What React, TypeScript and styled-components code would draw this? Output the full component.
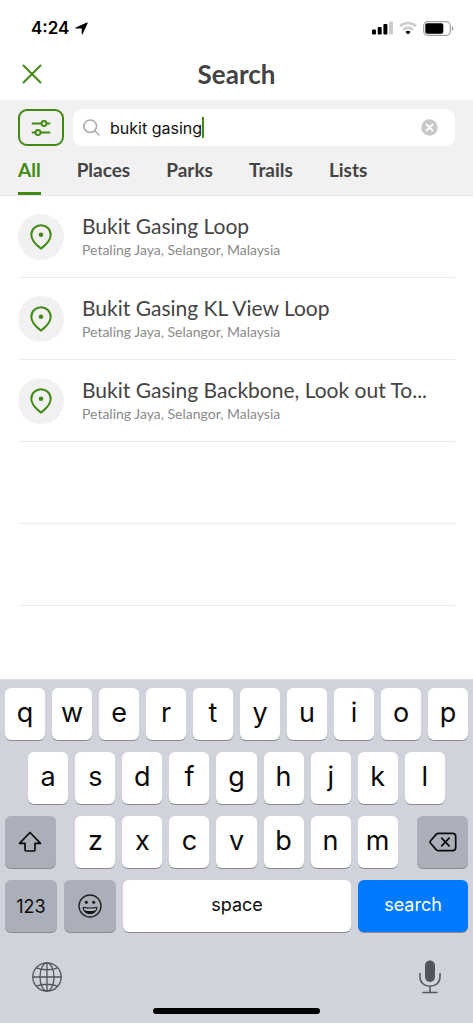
import React, { useState } from "react";
import styled, { createGlobalStyle, css } from "styled-components";

const GREEN = "#428a13";
const INK = "#444444";
const SYSTEM = `Inter, "Liberation Sans", sans-serif`;
const BRAND = `Lato, "Open Sans", sans-serif`;

const GlobalStyle = createGlobalStyle`
  *, *::before, *::after { box-sizing: border-box; }
  html, body, #root { margin: 0; min-height: 100vh; }
  body { background: #fff; color: ${INK}; font-family: ${BRAND}; }
  button { border: 0; padding: 0; margin: 0; background: none; color: inherit; font: inherit; cursor: pointer; }
  svg { display: block; }
`;

const Screen = styled.div`
  display: flex;
  flex-direction: column;
  min-height: 100vh;
`;

const StatusBar = styled.div`
  display: flex;
  align-items: center;
  justify-content: space-between;
  height: 48px;
  padding: 8px 19px 0 31px;
  color: #000;
`;

const Clock = styled.div`
  display: flex;
  align-items: center;
  gap: 6px;
  font: 600 17px/20px ${SYSTEM};
`;

const Indicators = styled.div`
  display: flex;
  align-items: center;
  gap: 6px;
`;

const Header = styled.header`
  display: grid;
  grid-template-columns: 28px 1fr 28px;
  align-items: center;
  height: 52px;
  padding: 0 18px;
`;

const CloseButton = styled.button`
  display: grid;
  place-items: center;
  width: 28px;
  height: 28px;
  color: ${GREEN};
`;

const Title = styled.h1`
  margin: 0;
  text-align: center;
  font-size: 26px;
  line-height: 28px;
  font-weight: 700;
`;

const SearchPanel = styled.section`
  background: #f1f1f1;
  border-bottom: 1px solid #e6e6e6;
  padding: 9px 18px 0;
`;

const SearchRow = styled.div`
  display: flex;
  gap: 9px;
`;

const FilterButton = styled.button`
  display: grid;
  place-items: center;
  flex: none;
  width: 46px;
  height: 37px;
  border: 2px solid ${GREEN};
  border-radius: 9px;
  color: ${GREEN};
`;

const SearchBox = styled.div`
  display: flex;
  align-items: center;
  flex: 1;
  min-width: 0;
  height: 37px;
  padding: 0 17px 0 10px;
  border-radius: 9px;
  background: #fff;
`;

const SearchField = styled.label`
  display: flex;
  align-items: center;
  flex: 1;
  min-width: 0;
  cursor: text;
`;

const SearchInput = styled.input`
  field-sizing: content;
  min-width: 2px;
  margin: 0 0 0 10px;
  padding: 0;
  border: 0;
  outline: 0;
  background: none;
  color: #111;
  caret-color: transparent;
  font: 400 16px/20px ${SYSTEM};
`;

const Caret = styled.span`
  width: 2px;
  height: 21px;
  background: ${GREEN};
`;

const Tabs = styled.nav`
  display: flex;
  gap: 36px;
  margin-top: 12px;
`;

const Tab = styled.button<{ $active: boolean }>`
  height: 37px;
  padding-bottom: 10px;
  border-bottom: 3px solid ${(p) => (p.$active ? GREEN : "transparent")};
  color: ${(p) => (p.$active ? GREEN : INK)};
  font-size: 19px;
  line-height: 24px;
  font-weight: 700;
`;

const Results = styled.ul`
  flex: 1;
  margin: 0;
  padding: 0 18px;
  list-style: none;
`;

const ResultRow = styled.li`
  height: 82px;
  border-bottom: 1px solid #ececec;
`;

const ResultButton = styled.button`
  display: flex;
  align-items: center;
  gap: 18px;
  width: 100%;
  height: 100%;
  text-align: left;
`;

const PinBadge = styled.span`
  display: grid;
  place-items: center;
  flex: none;
  width: 46px;
  height: 46px;
  border-radius: 50%;
  background: #f1f1f1;
  color: ${GREEN};
`;

const ResultText = styled.span`
  flex: 1;
  min-width: 0;
  padding-right: 24px;
`;

const ResultName = styled.span`
  display: block;
  overflow: hidden;
  text-overflow: ellipsis;
  white-space: nowrap;
  font-size: 21px;
  line-height: 26px;
`;

const ResultPlace = styled.span`
  display: block;
  color: #8a8a8a;
  font-size: 14px;
  line-height: 22px;
`;

const Keyboard = styled.section`
  display: flex;
  flex-direction: column;
  gap: 12px;
  padding: 8px 5px 9px;
  border-top: 1px solid #dcdee4;
  background: #d0d3db;
  color: #0b0b0b;
  font-family: ${SYSTEM};
`;

const KeyRow = styled.div<{ $inset?: boolean }>`
  display: flex;
  justify-content: space-between;
  gap: 7px;
  padding: 0 ${(p) => (p.$inset ? "5%" : "0")};
`;

const LetterGroup = styled.div`
  display: flex;
  gap: 7px;
  flex: 0 0 auto;
  width: 69.6%;
`;

type Tone = "light" | "dark" | "blue";

const tones = {
  light: css`background: #fff;`,
  dark: css`background: #abafba;`,
  blue: css`background: #007aff; color: #fff;`,
};

const Key = styled.button<{ $tone?: Tone; $basis?: string; $word?: boolean }>`
  display: flex;
  align-items: center;
  justify-content: center;
  flex: ${(p) => (p.$basis ? `0 0 ${p.$basis}` : "1 1 0")};
  min-width: 0;
  height: 52px;
  padding-bottom: ${(p) => (p.$tone === "dark" ? 0 : 3)}px;
  border-radius: 6px;
  box-shadow: 0 1px 0 #898b90;
  font-size: ${(p) => (p.$word ? 18 : 27)}px;
  ${(p) => tones[p.$tone ?? "light"]}
`;

const Dock = styled.div`
  display: flex;
  align-items: center;
  justify-content: space-between;
  height: 38px;
  margin-top: 14px;
  padding: 0 27px;
  color: #50555e;
`;

const HomeIndicator = styled.div`
  align-self: center;
  width: 36%;
  height: 6px;
  border-radius: 3px;
  background: #000;
`;

const LocationArrow = () => (
  <svg width="13" height="13" viewBox="0 0 13 13" fill="currentColor" aria-hidden="true">
    <path d="M12.4.5c.3.1.3.4.2.7L7.700 12c-.3.6-1 .5-1-.2V6.500H1C.3 6.500.1 5.800.8 5.500L11.800.5c.2-.1.4-.1.6 0z" />
  </svg>
);

const SignalIcon = () => (
  <svg width="21" height="14" viewBox="0 0 21 14" aria-hidden="true">
    <rect x="0" y="8.500" width="4" height="5" rx="1" />
    <rect x="5.700" y="6" width="4" height="7.500" rx="1" />
    <rect x="11.400" y="3" width="4" height="10.500" rx="1" />
    <rect x="17" y="0.500" width="4" height="13" rx="1" fill="#ccc" />
  </svg>
);

const WifiIcon = () => (
  <svg width="18" height="14" viewBox="0 0 18 14" fill="none" aria-hidden="true">
    <path d="M1 5.200a11.500 11.500 0 0 1 16 0" stroke="#ccc" strokeWidth="2.600" />
    <path d="M4 8.700a7.300 7.300 0 0 1 10 0" stroke="#ccc" strokeWidth="2.400" />
    <path d="M9 13.500 6.400 10.900a3.900 3.900 0 0 1 5.200 0z" fill="#000" />
  </svg>
);

const BatteryIcon = () => (
  <svg width="31" height="15" viewBox="0 0 31 15" aria-hidden="true">
    <rect x="0.700" y="0.700" width="26.600" height="13.600" rx="4" fill="none" stroke="#a3a3a3" strokeWidth="1.200" />
    <rect x="2.300" y="2.300" width="18" height="10.400" rx="2" />
    <path d="M28.800 5v5c1-.4 1.700-1.400 1.700-2.500S29.800 5.400 28.800 5z" fill="#a3a3a3" />
  </svg>
);

const CloseIcon = () => (
  <svg width="20" height="20" viewBox="0 0 20 20" fill="none" stroke="currentColor" strokeWidth="2" strokeLinecap="round" aria-hidden="true">
    <path d="M1.500 1.500l17 17M18.500 1.500l-17 17" />
  </svg>
);

const SlidersIcon = () => (
  <svg width="20" height="18" viewBox="0 0 20 18" fill="none" stroke="currentColor" strokeWidth="1.900" strokeLinecap="round" aria-hidden="true">
    <path d="M1.500 4.500h8.800M15.700 4.500h2.800M1.500 13.500h2.800M9.700 13.500h8.800" />
    <circle cx="13" cy="4.500" r="2.500" />
    <circle cx="7" cy="13.500" r="2.500" />
  </svg>
);

const SearchIcon = () => (
  <svg width="17" height="17" viewBox="0 0 17 17" fill="none" stroke="#aaa" strokeWidth="1.500" strokeLinecap="round" aria-hidden="true">
    <circle cx="7.200" cy="7.200" r="6.300" />
    <path d="M11.800 11.800l4.200 4.200" />
  </svg>
);

const ClearIcon = () => (
  <svg width="17" height="17" viewBox="0 0 17 17" aria-hidden="true">
    <circle cx="8.500" cy="8.500" r="8.200" fill="#c8c8c8" />
    <path d="M5.500 5.500l6 6M11.500 5.500l-6 6" stroke="#fff" strokeWidth="1.800" strokeLinecap="round" />
  </svg>
);

const PinIcon = () => (
  <svg width="22" height="26" viewBox="0 0 22 26" fill="none" aria-hidden="true">
    <path d="M11 24.600C7.500 22 1.300 17.200 1.300 10.800a9.700 9.500 0 0 1 19.400 0C20.700 17.200 14.500 22 11 24.600z" stroke="currentColor" strokeWidth="2" strokeLinejoin="round" />
    <circle cx="11" cy="10.800" r="2.300" fill="currentColor" />
  </svg>
);

const ShiftIcon = () => (
  <svg width="24" height="22" viewBox="0 0 24 22" fill="none" stroke="currentColor" strokeWidth="1.700" strokeLinejoin="round" aria-hidden="true">
    <path d="M12 1.500 22.500 12.300H17v6.500c0 .8-.4 1.200-1.200 1.200H8.200c-.8 0-1.200-.4-1.200-1.200v-6.500H1.500z" />
  </svg>
);

const DeleteIcon = () => (
  <svg width="28" height="20" viewBox="0 0 28 20" fill="none" stroke="currentColor" strokeWidth="1.700" strokeLinecap="round" strokeLinejoin="round" aria-hidden="true">
    <path d="M9.300 1.300H23.500a3.200 3.200 0 0 1 3.200 3.200v11a3.200 3.200 0 0 1-3.200 3.200H9.300c-.8 0-1.400-.3-1.900-.8L1.600 11.200c-.7-.8-.7-1.600 0-2.400l5.800-6.700c.5-.5 1.100-.8 1.900-.8z" />
    <path d="M12.700 6.200l7.400 7.600M20.100 6.200l-7.400 7.600" />
  </svg>
);

const EmojiIcon = () => (
  <svg width="24" height="24" viewBox="0 0 24 24" fill="none" aria-hidden="true">
    <circle cx="12" cy="12" r="11" stroke="#222428" strokeWidth="1.400" />
    <circle cx="8.300" cy="8.300" r="1.500" fill="#111" />
    <circle cx="15.700" cy="8.300" r="1.500" fill="#111" />
    <path d="M5 13.200c4.500 1 9.500 1 14 0 0 4-3.100 6.500-7 6.500s-7-2.500-7-6.500z" fill="#111" stroke="#111" strokeWidth="0.800" strokeLinejoin="round" />
    <path d="M5.700 13.900c4.100.9 8.500.9 12.600 0l-.7 2.300c-3.600 1.200-7.600 1.200-11.200 0z" fill="#b4b8c2" />
  </svg>
);

const GlobeIcon = () => (
  <svg width="30" height="30" viewBox="0 0 30 30" fill="none" stroke="currentColor" strokeWidth="1.300" aria-hidden="true">
    <circle cx="15" cy="15" r="14.200" />
    <ellipse cx="15" cy="15" rx="7" ry="14.200" />
    <path d="M15 .8v28.400M.8 15h28.400M4.500 5.800c6 2.600 15 2.600 21 0M4.500 24.200c6-2.600 15-2.600 21 0" />
  </svg>
);

const MicIcon = () => (
  <svg width="22" height="34" viewBox="0 0 22 34" fill="none" aria-hidden="true">
    <rect x="6" y="0.500" width="10" height="21.500" rx="5" fill="currentColor" />
    <path d="M1 13.500V17c0 5.700 4.300 9.300 10 9.300s10-3.600 10-9.300v-3.500M11 26.300v6M4 32.500h14" stroke="currentColor" strokeWidth="1.500" strokeLinecap="round" />
  </svg>
);

const TAB_NAMES = ["All", "Places", "Parks", "Trails", "Lists"];

const RESULTS = [
  "Bukit Gasing Loop",
  "Bukit Gasing KL View Loop",
  "Bukit Gasing Backbone, Look out To...",
];

const Letters = ({ keys, onPress }: { keys: string; onPress: (k: string) => void }) => (
  <>
    {keys.split("").map((k) => (
      <Key key={k} type="button" onClick={() => onPress(k)}>
        {k}
      </Key>
    ))}
  </>
);

export default function App() {
  const [query, setQuery] = useState("bukit gasing");
  const [tab, setTab] = useState("All");
  const type = (k: string) => setQuery((q) => q + k);

  return (
    <Screen>
      <GlobalStyle />
      <StatusBar>
        <Clock>
          4:24
          <LocationArrow />
        </Clock>
        <Indicators>
          <SignalIcon />
          <WifiIcon />
          <BatteryIcon />
        </Indicators>
      </StatusBar>
      <Header>
        <CloseButton type="button" aria-label="Close">
          <CloseIcon />
        </CloseButton>
        <Title>Search</Title>
      </Header>
      <SearchPanel>
        <SearchRow>
          <FilterButton type="button" aria-label="Filters">
            <SlidersIcon />
          </FilterButton>
          <SearchBox>
            <SearchField>
              <SearchIcon />
              <SearchInput
                type="text"
                aria-label="Search trails"
                value={query}
                onChange={(e) => setQuery(e.target.value)}
              />
              <Caret />
            </SearchField>
            <button type="button" aria-label="Clear search" onClick={() => setQuery("")}>
              <ClearIcon />
            </button>
          </SearchBox>
        </SearchRow>
        <Tabs>
          {TAB_NAMES.map((name) => (
            <Tab key={name} type="button" $active={name === tab} onClick={() => setTab(name)}>
              {name}
            </Tab>
          ))}
        </Tabs>
      </SearchPanel>
      <Results>
        {RESULTS.map((name) => (
          <ResultRow key={name}>
            <ResultButton type="button">
              <PinBadge>
                <PinIcon />
              </PinBadge>
              <ResultText>
                <ResultName>{name}</ResultName>
                <ResultPlace>Petaling Jaya, Selangor, Malaysia</ResultPlace>
              </ResultText>
            </ResultButton>
          </ResultRow>
        ))}
        <ResultRow aria-hidden="true" />
        <ResultRow aria-hidden="true" />
      </Results>
      <Keyboard aria-label="Keyboard">
        <KeyRow>
          <Letters keys="qwertyuiop" onPress={type} />
        </KeyRow>
        <KeyRow $inset>
          <Letters keys="asdfghjkl" onPress={type} />
        </KeyRow>
        <KeyRow>
          <Key type="button" $tone="dark" $basis="11%" aria-label="Shift">
            <ShiftIcon />
          </Key>
          <LetterGroup>
            <Letters keys="zxcvbnm" onPress={type} />
          </LetterGroup>
          <Key type="button" $tone="dark" $basis="11%" aria-label="Delete" onClick={() => setQuery((q) => q.slice(0, -1))}>
            <DeleteIcon />
          </Key>
        </KeyRow>
        <KeyRow>
          <Key type="button" $tone="dark" $basis="52px" $word>
            123
          </Key>
          <Key type="button" $tone="dark" $basis="52px" aria-label="Emoji">
            <EmojiIcon />
          </Key>
          <Key type="button" $word onClick={() => type(" ")}>
            space
          </Key>
          <Key type="button" $tone="blue" $basis="110px" $word>
            search
          </Key>
        </KeyRow>
        <Dock>
          <button type="button" aria-label="Next keyboard">
            <GlobeIcon />
          </button>
          <button type="button" aria-label="Dictate">
            <MicIcon />
          </button>
        </Dock>
        <HomeIndicator />
      </Keyboard>
    </Screen>
  );
}
